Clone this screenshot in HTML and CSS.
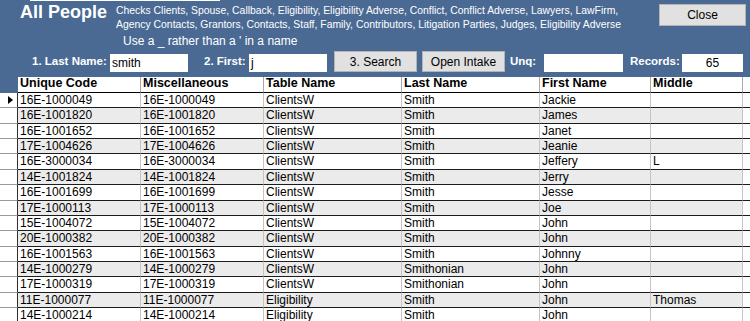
FILE: index.html
```html
<!DOCTYPE html>
<html>
<head>
<meta charset="utf-8">
<link rel="stylesheet" href="styles.css">
</head>
<body>
<div class="app">
  <div class="top">
    <div class="strip"></div>
    <div class="head-row">
      <h1 class="title">All People</h1>
      <p class="desc">Checks Clients, Spouse, Callback, Eligibility, Eligibility Adverse, Conflict, Conflict Adverse, Lawyers, LawFirm,<br>Agency Contacts, Grantors, Contacts, Staff, Family, Contributors, Litigation Parties, Judges, Eligibility Adverse</p>
      <button class="btn close">Close</button>
    </div>
    <div class="hint">Use a _ rather than a ' in a name</div>
    <div class="search-row">
      <label class="lbl l-last">1. Last Name:</label>
      <div class="field f-last">smith</div>
      <label class="lbl l-first">2. First:</label>
      <div class="field f-first">j</div>
      <button class="btn b-search">3. Search</button>
      <button class="btn b-intake">Open Intake</button>
      <label class="lbl l-unq">Unq:</label>
      <div class="field f-unq"></div>
      <label class="lbl l-rec">Records:</label>
      <div class="field f-rec">65</div>
    </div>
  </div>

  <div class="grid">
    <div class="row hdr">
      <div class="sel"></div>
      <div class="c">Unique Code</div><div class="c">Miscellaneous</div><div class="c">Table Name</div><div class="c">Last Name</div><div class="c">First Name</div><div class="c">Middle</div><div class="fill"></div>
    </div>
    <div class="row"><div class="sel"><span class="cur"></span></div><div class="c">16E-1000049</div><div class="c">16E-1000049</div><div class="c">ClientsW</div><div class="c">Smith</div><div class="c">Jackie</div><div class="c"></div><div class="fill"></div></div>
    <div class="row alt"><div class="sel"></div><div class="c">16E-1001820</div><div class="c">16E-1001820</div><div class="c">ClientsW</div><div class="c">Smith</div><div class="c">James</div><div class="c"></div><div class="fill"></div></div>
    <div class="row"><div class="sel"></div><div class="c">16E-1001652</div><div class="c">16E-1001652</div><div class="c">ClientsW</div><div class="c">Smith</div><div class="c">Janet</div><div class="c"></div><div class="fill"></div></div>
    <div class="row alt"><div class="sel"></div><div class="c">17E-1004626</div><div class="c">17E-1004626</div><div class="c">ClientsW</div><div class="c">Smith</div><div class="c">Jeanie</div><div class="c"></div><div class="fill"></div></div>
    <div class="row"><div class="sel"></div><div class="c">16E-3000034</div><div class="c">16E-3000034</div><div class="c">ClientsW</div><div class="c">Smith</div><div class="c">Jeffery</div><div class="c">L</div><div class="fill"></div></div>
    <div class="row alt"><div class="sel"></div><div class="c">14E-1001824</div><div class="c">14E-1001824</div><div class="c">ClientsW</div><div class="c">Smith</div><div class="c">Jerry</div><div class="c"></div><div class="fill"></div></div>
    <div class="row"><div class="sel"></div><div class="c">16E-1001699</div><div class="c">16E-1001699</div><div class="c">ClientsW</div><div class="c">Smith</div><div class="c">Jesse</div><div class="c"></div><div class="fill"></div></div>
    <div class="row alt"><div class="sel"></div><div class="c">17E-1000113</div><div class="c">17E-1000113</div><div class="c">ClientsW</div><div class="c">Smith</div><div class="c">Joe</div><div class="c"></div><div class="fill"></div></div>
    <div class="row"><div class="sel"></div><div class="c">15E-1004072</div><div class="c">15E-1004072</div><div class="c">ClientsW</div><div class="c">Smith</div><div class="c">John</div><div class="c"></div><div class="fill"></div></div>
    <div class="row alt"><div class="sel"></div><div class="c">20E-1000382</div><div class="c">20E-1000382</div><div class="c">ClientsW</div><div class="c">Smith</div><div class="c">John</div><div class="c"></div><div class="fill"></div></div>
    <div class="row"><div class="sel"></div><div class="c">16E-1001563</div><div class="c">16E-1001563</div><div class="c">ClientsW</div><div class="c">Smith</div><div class="c">Johnny</div><div class="c"></div><div class="fill"></div></div>
    <div class="row alt"><div class="sel"></div><div class="c">14E-1000279</div><div class="c">14E-1000279</div><div class="c">ClientsW</div><div class="c">Smithonian</div><div class="c">John</div><div class="c"></div><div class="fill"></div></div>
    <div class="row"><div class="sel"></div><div class="c">17E-1000319</div><div class="c">17E-1000319</div><div class="c">ClientsW</div><div class="c">Smithonian</div><div class="c">John</div><div class="c"></div><div class="fill"></div></div>
    <div class="row alt"><div class="sel"></div><div class="c">11E-1000077</div><div class="c">11E-1000077</div><div class="c">Eligibility</div><div class="c">Smith</div><div class="c">John</div><div class="c">Thomas</div><div class="fill"></div></div>
    <div class="row"><div class="sel"></div><div class="c">14E-1000214</div><div class="c">14E-1000214</div><div class="c">Eligibility</div><div class="c">Smith</div><div class="c">John</div><div class="c"></div><div class="fill"></div></div>
  </div>
</div>
</body>
</html>
```
FILE: styles.css
```css
html, body {
  margin: 0;
  padding: 0;
  background: #4a6a94;
  overflow: hidden;
}
.app {
  width: 750px;
  height: 321px;
  overflow: hidden;
  font-family: "Liberation Sans", Arial, sans-serif;
  color: #fff;
}
.top {
  display: flex;
  flex-direction: column;
  padding-bottom: 5px;
}
.strip {
  height: 1px;
  width: 190px;
  margin-left: 30px;
  background: #fff;
}
.head-row {
  display: flex;
  align-items: flex-start;
  height: 33px;
}
.title {
  margin: 1px 0 0 20px;
  font-size: 18px;
  line-height: 20px;
  font-weight: bold;
  white-space: nowrap;
}
.desc {
  margin: 3px 0 0 9px;
  font-size: 10.4px;
  line-height: 13.5px;
  white-space: nowrap;
}
.btn {
  font-family: "Liberation Sans", Arial, sans-serif;
  font-size: 12px;
  color: #000;
  background: #e1e1e1;
  border: 1px solid #b4b4b4;
  padding: 0;
  box-sizing: border-box;
}
.close {
  margin: 3px 4px 0 auto;
  width: 87px;
  height: 22px;
}
.hint {
  margin-left: 123px;
  font-size: 12px;
  line-height: 14px;
  white-space: nowrap;
}
.search-row {
  display: flex;
  align-items: flex-end;
  height: 24px;
}
.lbl {
  font-size: 11.5px;
  font-weight: bold;
  line-height: 14px;
  margin-bottom: 4px;
  white-space: nowrap;
}
.field {
  height: 18px;
  background: #fff;
  color: #000;
  font-size: 12px;
  line-height: 18px;
  padding-left: 2px;
  box-sizing: border-box;
}
.l-last { margin-left: 32px; width: 78px; }
.f-last { width: 78px; }
.l-first { margin-left: 16px; width: 45px; }
.f-first { width: 78px; }
.b-search { margin-left: 7px; width: 83px; height: 21px; }
.b-intake { margin-left: 5px; width: 83px; height: 21px; }
.l-unq { margin-left: 5px; width: 34px; }
.f-unq { width: 79px; }
.l-rec { margin-left: 7px; width: 52px; }
.f-rec { width: 61px; text-align: center; padding-left: 0; }

.grid {
  color: #000;
  font-size: 12px;
}
.row {
  display: grid;
  grid-template-columns: 18px 123px 123px 138px 138px 111px 92px 7px;
  height: 15.36px;
  background: #fff;
}
.row.alt { background: #ebebeb; }
.row > div {
  box-sizing: border-box;
  border-bottom: 1px solid #1c1c1c;
  white-space: nowrap;
  overflow: hidden;
}
.c {
  border-right: 1px solid #c4c4c4;
  padding-left: 2px;
  line-height: 14px;
}
.sel {
  background: #fff;
  border-right: 1px solid #303030;
  border-bottom-color: #9a9a9a !important;
  position: relative;
}
.fill { background: #fff; }
.hdr {
  height: 16px;
  background: #fff;
}
.hdr .c {
  font-weight: bold;
  font-size: 12.5px;
  line-height: 13px;
  border-bottom: 1px solid #000;
  border-right-color: #a8a8a8;
}
.hdr .sel {
  background: #4a6a94;
  border-right: none;
  border-bottom: none;
}
.hdr .fill { border-bottom: 1px solid #000; }
.cur {
  position: absolute;
  left: 8px;
  top: 3px;
  width: 0;
  height: 0;
  border-left: 5px solid #000;
  border-top: 4px solid transparent;
  border-bottom: 4px solid transparent;
}
```
